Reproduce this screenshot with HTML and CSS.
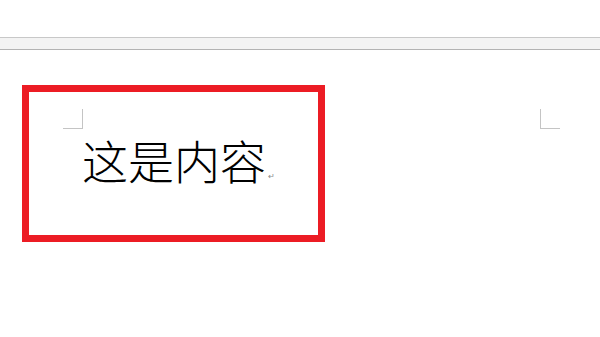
FILE: index.html
```html
<!DOCTYPE html>
<html lang="zh">
<head>
<meta charset="utf-8">
<link rel="stylesheet" href="styles.css">
</head>
<body>
<div class="topbar"></div>
<div class="ruler"></div>
<div class="page">
  <div class="marks">
    <div class="mark mark-left"></div>
    <div class="mark mark-right"></div>
  </div>
  <p class="content">这是内容<span class="ret">↵</span></p>
  <div class="highlight"></div>
</div>
</body>
</html>
```
FILE: styles.css
```css
html, body {
  margin: 0;
  padding: 0;
  background: #ffffff;
}
body {
  width: 600px;
  height: 337px;
  overflow: hidden;
  font-family: "Noto Sans CJK SC", "Noto Sans", sans-serif;
}
.topbar {
  height: 37px;
}
.ruler {
  height: 11px;
  background: #f3f3f3;
  border-top: 1px solid #c8c8c8;
  border-bottom: 1px solid #b3b3b3;
}
.page {
  position: relative;
  box-sizing: border-box;
  height: 287px;
  padding-top: 59px;
}
.marks {
  display: flex;
  justify-content: space-between;
  padding: 0 40px 0 63px;
}
.mark {
  width: 19px;
  height: 19px;
  border-bottom: 1px solid #c4c4c4;
}
.mark-left {
  border-right: 1px solid #c4c4c4;
}
.mark-right {
  border-left: 1px solid #c4c4c4;
}
.content {
  margin: 7px 0 0 82px;
  font-size: 46px;
  line-height: 46px;
  font-weight: 300;
  color: #000;
}
.ret {
  font-size: 8px;
  color: #8a8a8a;
  margin-left: 2px;
}
.highlight {
  position: absolute;
  left: 22px;
  top: 35px;
  width: 289px;
  height: 143px;
  border: 7px solid #ec1c24;
}
```
